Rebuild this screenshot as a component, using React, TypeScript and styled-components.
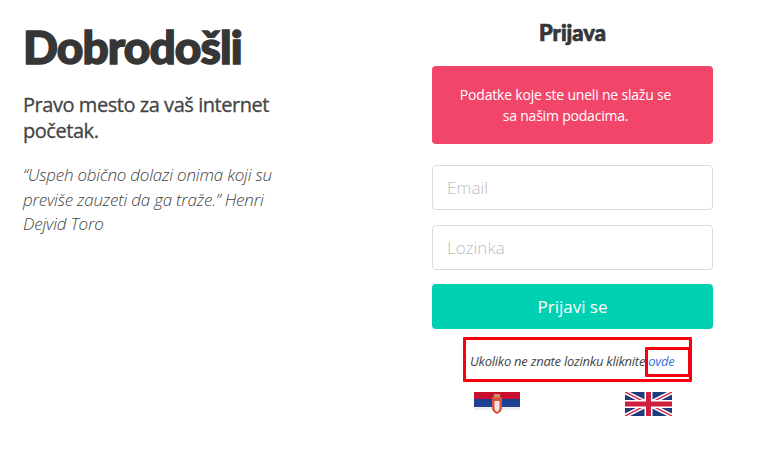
import styled, { createGlobalStyle } from "styled-components";

const GlobalStyle = createGlobalStyle`
  html, body {
    margin: 0;
    background: #fff;
    font-family: "Open Sans", "Liberation Sans", sans-serif;
    color: #3f3f3f;
  }
  * { box-sizing: border-box; }
`;

const Page = styled.div`
  display: flex;
  width: 771px;
  height: 471px;
  overflow: hidden;
`;

const Intro = styled.section`
  width: 432px;
  padding: 20px 0 0 23px;
`;

const Title = styled.h1`
  margin: 0;
  font-family: "Lato", sans-serif;
  font-size: 46px;
  line-height: 54px;
  font-weight: 900;
  letter-spacing: -0.9px;
  color: #363636;
  -webkit-text-stroke: 1.5px #363636;
`;

const Subtitle = styled.h2`
  margin: 18px 0 0;
  width: 270px;
  font-size: 20px;
  line-height: 26px;
  font-weight: 400;
  letter-spacing: -0.45px;
  color: #444;
  -webkit-text-stroke: 0.3px #444;
`;

const Quote = styled.p`
  margin: 19px 0 0;
  width: 258px;
  font-size: 17px;
  line-height: 24.5px;
  font-style: italic;
  font-weight: 300;
  letter-spacing: -0.22px;
  color: #444;
`;

const LoginPanel = styled.section`
  position: relative;
  width: 281px;
  padding-top: 19px;
`;

const PanelTitle = styled.h3`
  margin: 0 0 20px;
  height: 27px;
  font-family: "Lato", sans-serif;
  font-size: 22px;
  line-height: 27px;
  font-weight: 900;
  text-align: center;
  color: #363636;
  -webkit-text-stroke: 0.7px #363636;
`;

const ErrorBox = styled.div`
  height: 78px;
  padding: 18px 36px 0 22px;
  border-radius: 4px;
  background: #f2456a;
  color: #fff;
  font-size: 14px;
  line-height: 21px;
  letter-spacing: -0.2px;
  text-align: center;
  white-space: nowrap;
`;

const Form = styled.form`
  display: flex;
  flex-direction: column;
  gap: 15px;
  margin-top: 21px;
`;

const Field = styled.input`
  display: block;
  width: 100%;
  height: 45px;
  padding: 0 14px;
  border: 1px solid #dbdbdb;
  border-radius: 4px;
  background: #fff;
  font-family: inherit;
  font-size: 17px;
  font-weight: 300;
  outline: none;

  &::placeholder {
    color: #bdbdbd;
    opacity: 1;
  }
`;

const Submit = styled.button`
  height: 45px;
  margin-top: -1px;
  border: 0;
  border-radius: 4px;
  background: #00d1b2;
  color: #fff;
  font-family: inherit;
  font-size: 17px;
`;

const Hint = styled.p`
  margin: 22px 0 0;
  height: 20px;
  padding-left: 38px;
  font-size: 13px;
  line-height: 20px;
  font-style: italic;
  letter-spacing: -0.25px;
  color: #444;
  white-space: nowrap;
`;

const HintLink = styled.a`
  color: #3273dc;
  text-decoration: none;
`;

const Mark = styled.div<{ $left: number; $top: number; $width: number; $height: number }>`
  position: absolute;
  left: ${(p) => p.$left}px;
  top: ${(p) => p.$top}px;
  width: ${(p) => p.$width}px;
  height: ${(p) => p.$height}px;
  border: 3px solid #f80010;
  border-radius: 1px;
  pointer-events: none;
`;

const Flags = styled.div`
  display: flex;
  justify-content: space-between;
  margin-top: 21px;
  padding: 0 41px 0 42px;
`;

const SerbianFlag = () => (
  <svg width="46" height="24" viewBox="0 0 46 24">
    <rect width="46" height="7" fill="#c8102e" />
    <rect y="7" width="46" height="8" fill="#1d3f94" />
    <rect y="15" width="46" height="3" fill="#eef0f6" />
    <path d="M18 5h10v11c0 3-2.500 5-5 6-2.500-1-5-3-5-6z" fill="#d9503f" />
    <path d="M20.500 9h5v7c0 1.500-1 3-2.500 4-1.500-1-2.500-2.500-2.500-4z" fill="#f3e6e0" />
    <path d="M20 2h6v3.500h-6z" fill="#c9925a" />
  </svg>
);

const BritishFlag = () => (
  <svg width="47" height="24" viewBox="0 0 47 24">
    <rect width="47" height="24" fill="#1f3a7d" />
    <path d="M0 0L47 24M47 0L0 24" stroke="#fff" strokeWidth="4.500" />
    <path d="M0 0L47 24M47 0L0 24" stroke="#cf2a45" strokeWidth="1.500" />
    <path d="M23.500 0V24M0 12H47" stroke="#fff" strokeWidth="8" />
    <path d="M23.500 0V24M0 12H47" stroke="#cf1f3e" strokeWidth="5" />
  </svg>
);

export default function App() {
  return (
    <Page>
      <GlobalStyle />
      <Intro>
        <Title>Dobrodošli</Title>
        <Subtitle>Pravo mesto za vaš internet početak.</Subtitle>
        <Quote>“Uspeh obično dolazi onima koji su previše zauzeti da ga traže.” Henri Dejvid Toro</Quote>
      </Intro>
      <LoginPanel>
        <PanelTitle>Prijava</PanelTitle>
        <ErrorBox>
          Podatke koje ste uneli ne slažu se
          <br />
          sa našim podacima.
        </ErrorBox>
        <Form onSubmit={(e) => e.preventDefault()}>
          <Field type="text" placeholder="Email" />
          <Field type="password" placeholder="Lozinka" />
          <Submit type="submit">Prijavi se</Submit>
        </Form>
        <Hint>
          Ukoliko ne znate lozinku kliknite <HintLink href="#">ovde</HintLink>
        </Hint>
        <Mark $left={31} $top={337} $width={229} $height={45} />
        <Mark $left={213} $top={347} $width={46} $height={30} />
        <Flags>
          <SerbianFlag />
          <BritishFlag />
        </Flags>
      </LoginPanel>
    </Page>
  );
}
